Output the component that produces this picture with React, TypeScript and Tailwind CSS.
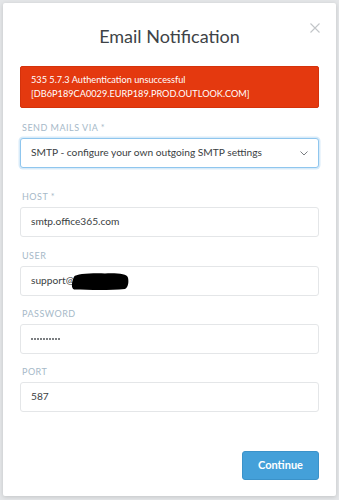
import React from 'react';

const Label = ({ children }: { children: React.ReactNode }) => (
  <div className="block pl-[2px] text-[9px] leading-[14px] uppercase tracking-[0.5px] text-[#a6b9c8] mb-[3px]">{children}</div>
);

const Field = ({ children }: { children: React.ReactNode }) => (
  <div className="h-[30px] px-[10px] flex items-center bg-white border border-[#e4e6e8] rounded-[3px] text-[10.2px] text-[#3a3e42]">
    {children}
  </div>
);

export default function App() {
  return (
    <div
      className="w-[339px] h-[500px] bg-[#e4e6e8] pt-[3px] px-[3px] pb-[4px] overflow-hidden"
      style={{ fontFamily: 'Lato, "Open Sans", sans-serif' }}
    >
      <div className="relative h-full bg-white rounded-[2px] shadow-[0_1px_4px_rgba(0,0,0,0.15)] px-[17px] flex flex-col">
        {/* close */}
        <button className="absolute top-[20px] right-[16px] w-[10px] h-[10px] text-[#c2c5c8]">
          <svg viewBox="0 0 10 10" width="10" height="10" fill="none" stroke="currentColor" strokeWidth="1.1">
            <path d="M0.5 0.5 L9.5 9.5 M9.5 0.5 L0.5 9.5" />
          </svg>
        </button>

        <h1 className="mt-[21px] text-center text-[18px] leading-[24px] text-[#3e4347]">Email Notification</h1>

        <div className="mt-[18px] bg-[#e4390f] border border-[#d4320b] rounded-[2px] px-[10px] py-[6px] text-white text-[9.2px] leading-[14px]">
          <div>535 5.7.3 Authentication unsuccessful</div>
          <div>[DB6P189CA0029.EURP189.PROD.OUTLOOK.COM]</div>
        </div>

        <div className="mt-[13px]">
          <Label>Send Mails via *</Label>
          <div className="h-[30px] pl-[10px] pr-[10px] flex items-center justify-between bg-white border border-[#8fc6ee] rounded-[3px] shadow-[0_0_0_1.5px_rgba(143,198,238,0.35)] text-[10.2px] text-[#3a3e42]">
            <span>SMTP - configure your own outgoing SMTP settings</span>
            <svg viewBox="0 0 8 5" width="8" height="5" fill="none" stroke="#7a7e82" strokeWidth="1">
              <path d="M0.5 0.5 L4 4 L7.5 0.5" />
            </svg>
          </div>
        </div>

        <div className="mt-[22px]">
          <Label>Host *</Label>
          <Field>smtp.office365.com</Field>
        </div>

        <div className="mt-[12px]">
          <Label>User</Label>
          <Field>
            <span>support@</span>
            {/* redaction scribble */}
            <svg viewBox="0 0 60 20" width="60" height="19" preserveAspectRatio="none" className="shrink-0 -ml-[4px] mt-[1px]">
              <path d="M4 5 C6 2 20 1 35 1.5 C48 1 57 2 58 6 C59 11 58 16 55 18 C40 19.5 20 19 4 18.5 C1 17 1.5 11 4 5 Z" fill="#000" />
            </svg>
          </Field>
        </div>

        <div className="mt-[11px]">
          <Label>Password</Label>
          <Field>
            <div className="flex gap-[1px]">
              {Array.from({ length: 10 }).map((_, i) => (
                <span key={i} className="w-[2px] h-[2px] rounded-full bg-[#505458]" />
              ))}
            </div>
          </Field>
        </div>

        <div className="mt-[11px]">
          <Label>Port</Label>
          <Field>587</Field>
        </div>

        <div className="mt-[39px] flex justify-end">
          <button className="w-[77px] h-[29px] bg-[#44a0d9] border border-[#3b92c9] rounded-[3px] text-white text-[11px] font-bold">
            Continue
          </button>
        </div>
      </div>
    </div>
  );
}
